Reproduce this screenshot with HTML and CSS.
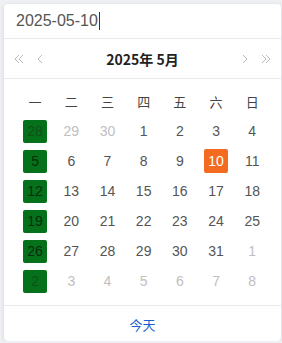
FILE: index.html
```html
<!DOCTYPE html>
<html lang="zh">
  <head>
    <title>日期选择</title>
    <meta charset="UTF-8" />
    <link rel="stylesheet" href="styles.css">
  </head>
  <body>
    <div class="picker">
      <div class="picker-input">
        <span>2025-05-10</span><span class="caret"></span>
      </div>
      <div class="picker-header">
        <div class="nav">
          <svg width="10" height="10" viewBox="0 0 10 10"><path d="M5 1 L1 5 L5 9 M9 1 L5 5 L9 9" fill="none" stroke="#bbb" stroke-width="1"/></svg>
          <svg width="10" height="10" viewBox="0 0 10 10"><path d="M6 1 L2 5 L6 9" fill="none" stroke="#bbb" stroke-width="1"/></svg>
        </div>
        <div class="title">2025年 5月</div>
        <div class="nav">
          <svg width="10" height="10" viewBox="0 0 10 10"><path d="M4 1 L8 5 L4 9" fill="none" stroke="#bbb" stroke-width="1"/></svg>
          <svg width="10" height="10" viewBox="0 0 10 10"><path d="M1 1 L5 5 L1 9 M5 1 L9 5 L5 9" fill="none" stroke="#bbb" stroke-width="1"/></svg>
        </div>
      </div>
      <div class="picker-body">
        <div class="grid">
          <div class="wd">一</div><div class="wd">二</div><div class="wd">三</div><div class="wd">四</div><div class="wd">五</div><div class="wd">六</div><div class="wd">日</div>

          <div class="day week other"><span>28</span></div><div class="day other"><span>29</span></div><div class="day other"><span>30</span></div><div class="day"><span>1</span></div><div class="day"><span>2</span></div><div class="day"><span>3</span></div><div class="day"><span>4</span></div>

          <div class="day week"><span>5</span></div><div class="day"><span>6</span></div><div class="day"><span>7</span></div><div class="day"><span>8</span></div><div class="day"><span>9</span></div><div class="day selected"><span>10</span></div><div class="day"><span>11</span></div>

          <div class="day week"><span>12</span></div><div class="day"><span>13</span></div><div class="day"><span>14</span></div><div class="day"><span>15</span></div><div class="day"><span>16</span></div><div class="day"><span>17</span></div><div class="day"><span>18</span></div>

          <div class="day week"><span>19</span></div><div class="day"><span>20</span></div><div class="day"><span>21</span></div><div class="day"><span>22</span></div><div class="day"><span>23</span></div><div class="day"><span>24</span></div><div class="day"><span>25</span></div>

          <div class="day week"><span>26</span></div><div class="day"><span>27</span></div><div class="day"><span>28</span></div><div class="day"><span>29</span></div><div class="day"><span>30</span></div><div class="day"><span>31</span></div><div class="day other"><span>1</span></div>

          <div class="day week other"><span>2</span></div><div class="day other"><span>3</span></div><div class="day other"><span>4</span></div><div class="day other"><span>5</span></div><div class="day other"><span>6</span></div><div class="day other"><span>7</span></div><div class="day other"><span>8</span></div>
        </div>
      </div>
      <div class="picker-footer">
        <a href="#">今天</a>
      </div>
    </div>
  </body>
</html>
```

FILE: styles.css
```css
body {
  margin: 0;
  background-color: #eef0f3;
  font-family: "Liberation Sans", "Noto Sans CJK SC", sans-serif;
  font-size: 14px;
  overflow: hidden;
}

.picker {
  margin: 4px 0 0 4px;
  width: 277px;
  height: 337px;
  background-color: white;
  border-radius: 4px;
  box-shadow: 0 1px 4px rgba(0, 0, 0, 0.12);
}

.picker-input {
  height: 34px;
  padding-left: 12px;
  display: flex;
  align-items: center;
  color: #555;
  font-size: 16px;
  border-bottom: 1px solid #e9e9e9;
}

.caret {
  display: inline-block;
  width: 1px;
  height: 18px;
  margin-left: 1px;
  background-color: #333;
}

.picker-header {
  height: 39px;
  padding: 0 10px;
  display: flex;
  align-items: center;
  justify-content: space-between;
  border-bottom: 1px solid #e9e9e9;
}

.nav {
  display: flex;
  gap: 12px;
}

.title {
  font-family: "Noto Sans CJK SC", sans-serif;
  font-weight: 700;
  font-size: 14px;
  color: #222;
}

.picker-body {
  padding: 7px 0 9px 13px;
  border-bottom: 1px solid #e9e9e9;
}

.grid {
  display: grid;
  grid-template-columns: repeat(7, 36.2px);
  grid-auto-rows: 30px;
}

.wd {
  display: flex;
  align-items: center;
  justify-content: center;
  font-family: "Noto Sans CJK SC", sans-serif;
  color: #444;
  font-size: 13px;
}

.day {
  display: flex;
  align-items: center;
  justify-content: center;
  color: #555;
}

.day span {
  width: 24px;
  height: 23px;
  line-height: 23px;
  text-align: center;
  border-radius: 2px;
}

.day.other {
  color: #c0c0c0;
}

.day.week span {
  background-color: #05711b;
  color: #062e0b;
}

.day.week.other span {
  color: #134f1a;
}

.day.selected span {
  height: 24px;
  line-height: 24px;
  background-color: #f26b21;
  color: white;
}

.picker-footer {
  height: 36px;
  display: flex;
  align-items: center;
  justify-content: center;
}

.picker-footer a {
  font-family: "Noto Sans CJK SC", sans-serif;
  font-size: 13px;
  color: #1a5fcc;
  text-decoration: none;
}
```
